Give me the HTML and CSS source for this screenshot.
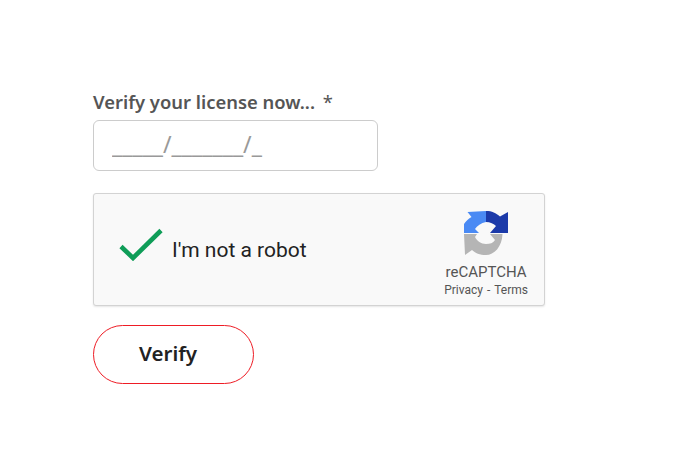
FILE: index.html
```html
<!DOCTYPE html>
<html lang="en">
  <head>
    <meta charset="UTF-8" />
    <meta name="viewport" content="width=device-width, initial-scale=1.0" />
    <title>Verify your license</title>
    <link rel="stylesheet" href="styles.css">
  </head>
  <body>
    <form class="verify-form">
      <label class="field-label" for="license">Verify your license now... <span class="required">*</span></label>
      <input class="license-input" type="text" id="license" placeholder="_____/_______/_" />

      <div class="captcha">
        <div class="captcha-check">
          <svg class="check-icon" viewBox="0 0 44 34" width="44" height="34">
            <path d="M2 19.5 L14 31 L42 3.5" fill="none" stroke="#0f9d58" stroke-width="4.6" />
          </svg>
          <span class="captcha-text">I'm not a robot</span>
        </div>
        <div class="captcha-brand">
          <svg class="captcha-logo" viewBox="0 0 44 45" width="44" height="45">
            <path d="M0 22 V13 C2 10 4 8 7.5 6 L3.5 1 L22 0 V11 C17 12 13 15 11 18 L15 22 Z" fill="#4a8af4" />
            <path d="M22 0 C28 0 32 2 36 5.5 L44 1 V22 H26 L32 15 C30 13 26 11 22 11 Z" fill="#1c3aa9" />
            <path d="M0 23 H13 L11 26 C13 30 17 33 22 33 C26 33 29 32 31 29 L26 23 H38.5 C38 36 30 44 22 44 C16 44 11 42 8 39 L1 44 Z" fill="#b5b5b5" />
          </svg>
          <div class="captcha-name">reCAPTCHA</div>
          <div class="captcha-links"><span>Privacy</span><span>-</span><span>Terms</span></div>
        </div>
      </div>

      <button class="verify-btn" type="submit">Verify</button>
    </form>
  </body>
</html>
```

FILE: styles.css
```css
* {
  margin: 0;
  padding: 0;
  box-sizing: border-box;
}

body {
  background: white;
  font-family: "Noto Sans", sans-serif;
  color: #333;
}

.verify-form {
  display: flex;
  flex-direction: column;
  align-items: flex-start;
  padding: 90px 0 0 93px;
}

.field-label {
  font-size: 18.4px;
  line-height: 24px;
  font-weight: 600;
  color: #555;
  margin-bottom: 6px;
}

.required {
  margin-left: 3px;
  font-weight: 400;
}

.license-input {
  width: 285px;
  height: 51px;
  padding: 0 18px 3px;
  border: 1px solid #ccc;
  border-radius: 6px;
  font-family: "Noto Sans", sans-serif;
  font-size: 23px;
  margin-bottom: 22px;
}

.license-input::placeholder {
  color: #999;
  opacity: 1;
}

.captcha {
  width: 452px;
  height: 113px;
  display: flex;
  justify-content: space-between;
  align-items: center;
  padding: 0 16px 0 25px;
  background: #f9f9f9;
  border: 1px solid #d3d3d3;
  border-radius: 3px;
  box-shadow: 0 1px 2px rgba(0, 0, 0, 0.1);
  font-family: Roboto, sans-serif;
  margin-bottom: 19px;
}

.captcha-check {
  display: flex;
  align-items: center;
  gap: 9px;
}

.check-icon {
  display: block;
  margin-bottom: 12px;
}

.captcha-text {
  font-size: 21px;
  color: #222;
}

.captcha-brand {
  display: flex;
  flex-direction: column;
  align-items: center;
  padding-top: 10px;
  color: #555;
}

.captcha-logo {
  display: block;
  margin-bottom: 7px;
}

.captcha-name {
  font-size: 15px;
  line-height: 18px;
}

.captcha-links {
  display: flex;
  gap: 4px;
  font-size: 12px;
  line-height: 18px;
}

.verify-btn {
  width: 161px;
  height: 59px;
  padding: 0 11px 3px 0;
  background: white;
  border: 1px solid #ee1c25;
  border-radius: 30px;
  font-family: "Noto Sans", sans-serif;
  font-size: 20.5px;
  font-weight: 600;
  color: #222;
}
```
